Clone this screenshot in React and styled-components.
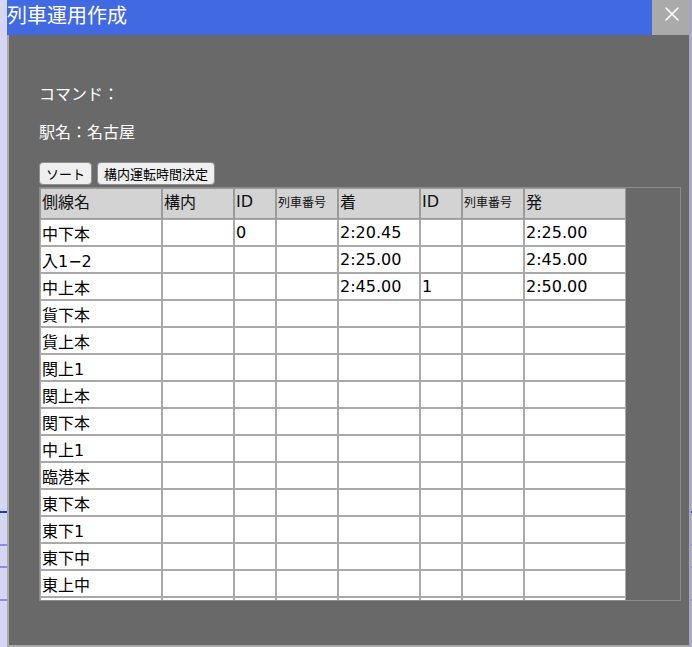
import React from 'react';
import styled, { createGlobalStyle } from 'styled-components';
import { X } from 'lucide-react';

const GlobalStyle = createGlobalStyle`
  html, body {
    margin: 0;
    padding: 0;
  }
  body {
    font-family: "Noto Sans CJK JP", "Noto Sans", sans-serif;
    overflow: hidden;
  }
`;

const columns = [
  { key: 'track', label: '側線名', width: 122 },
  { key: 'yard', label: '構内', width: 72 },
  { key: 'inId', label: 'ID', width: 42 },
  { key: 'inNo', label: '列車番号', width: 62, small: true },
  { key: 'arr', label: '着', width: 82 },
  { key: 'outId', label: 'ID', width: 42 },
  { key: 'outNo', label: '列車番号', width: 62, small: true },
  { key: 'dep', label: '発', width: 102 },
];

const rows = [
  { track: '中下本', inId: '0', arr: '2:20.45', dep: '2:25.00' },
  { track: '入1−2', arr: '2:25.00', dep: '2:45.00' },
  { track: '中上本', arr: '2:45.00', outId: '1', dep: '2:50.00' },
  { track: '貨下本' },
  { track: '貨上本' },
  { track: '関上1' },
  { track: '関上本' },
  { track: '関下本' },
  { track: '中上1' },
  { track: '臨港本' },
  { track: '東下本' },
  { track: '東下1' },
  { track: '東下中' },
  { track: '東上中' },
  {},
];

const App = () => {
  return (
    <>
      <GlobalStyle />
      <Page>
        <Dialog>
          <TitleBar>
            <Title>列車運用作成</Title>
            <CloseButton aria-label="閉じる">
              <X size={24} strokeWidth={1.6} color="#ffffff" />
            </CloseButton>
          </TitleBar>
          <Body>
            <InfoLine>コマンド：</InfoLine>
            <InfoLine>駅名：名古屋</InfoLine>
            <ButtonRow>
              <ActionButton>ソート</ActionButton>
              <ActionButton>構内運転時間決定</ActionButton>
            </ButtonRow>
            <TableBox>
              <Table>
                <colgroup>
                  {columns.map(c => (
                    <col key={c.key} style={{ width: c.width }} />
                  ))}
                </colgroup>
                <thead>
                  <tr>
                    {columns.map(c => (
                      <HeadCell key={c.key} small={c.small}>{c.label}</HeadCell>
                    ))}
                  </tr>
                </thead>
                <tbody>
                  {rows.map((r, i) => (
                    <tr key={i}>
                      {columns.map(c => (
                        <Cell key={c.key}>{r[c.key] || ''}</Cell>
                      ))}
                    </tr>
                  ))}
                </tbody>
              </Table>
            </TableBox>
          </Body>
        </Dialog>
      </Page>
    </>
  );
};

const Page = styled.div`
  display: flex;
  width: 692px;
  height: 647px;
  padding-left: 7px;
  box-sizing: border-box;
  background:
    linear-gradient(to bottom, transparent 511px, #2f2fe0 511px, #2f2fe0 513px, transparent 513px),
    linear-gradient(to bottom, transparent 544px, #8c8ce6 544px, #8c8ce6 546px, transparent 546px),
    linear-gradient(to bottom, transparent 566px, #8c8ce6 566px, #8c8ce6 568px, transparent 568px),
    linear-gradient(to bottom, transparent 599px, #8c8ce6 599px, #8c8ce6 601px, transparent 601px),
    linear-gradient(to right, #d6d6f4, #a9a9e6);
`;

const Dialog = styled.div`
  display: flex;
  flex-direction: column;
  width: 684px;
  height: 647px;
`;

const TitleBar = styled.div`
  display: flex;
  height: 35px;
  background: #4169e1;
`;

const Title = styled.div`
  flex: 1;
  color: #fff;
  font-size: 20px;
  line-height: 29px;
`;

const CloseButton = styled.div`
  width: 39px;
  display: flex;
  align-items: center;
  justify-content: center;
  padding-bottom: 7px;
  box-sizing: border-box;
  background: #aaaaaa;
`;

const Body = styled.div`
  flex: 1;
  display: flex;
  flex-direction: column;
  align-items: flex-start;
  background: #696969;
  border: 2px solid #aaaaaa;
  border-top: none;
  padding: 48px 0 0 30px;
  box-sizing: border-box;
  min-height: 0;
`;

const InfoLine = styled.div`
  color: #fff;
  font-size: 16px;
  line-height: 20px;
  margin-bottom: 18px;
`;

const ButtonRow = styled.div`
  display: flex;
  gap: 5px;
  margin-top: 3px;
  margin-bottom: 2px;
`;

const ActionButton = styled.button`
  height: 23px;
  padding: 0 6px;
  font-family: "Noto Sans CJK JP", sans-serif;
  font-size: 13px;
  color: #000;
  background: #efefef;
  border: 1px solid #8f8f8f;
  border-radius: 4px;
`;

const TableBox = styled.div`
  width: 642px;
  height: 414px;
  border: 1px solid #8c8c8c;
  box-sizing: border-box;
  overflow: hidden;
`;

const Table = styled.table`
  table-layout: fixed;
  width: 586px;
  border-collapse: separate;
  border-spacing: 0;
  font-family: "DejaVu Sans", "Noto Sans CJK JP", sans-serif;
`;

const HeadCell = styled.th`
  height: 31px;
  box-sizing: border-box;
  padding: 0 1px 5px;
  background: #d3d3d3;
  border: 1px solid #9a9a9a;
  text-align: left;
  font-weight: normal;
  font-size: ${props => (props.small ? '12px' : '16px')};
  color: #111;
  white-space: nowrap;
  overflow: hidden;
`;

const Cell = styled.td`
  height: 27px;
  box-sizing: border-box;
  padding: 0 1px;
  background: #fff;
  border: 1px solid #a9a9a9;
  font-size: 16px;
  color: #000;
  white-space: nowrap;
  overflow: hidden;
`;

export default App;
